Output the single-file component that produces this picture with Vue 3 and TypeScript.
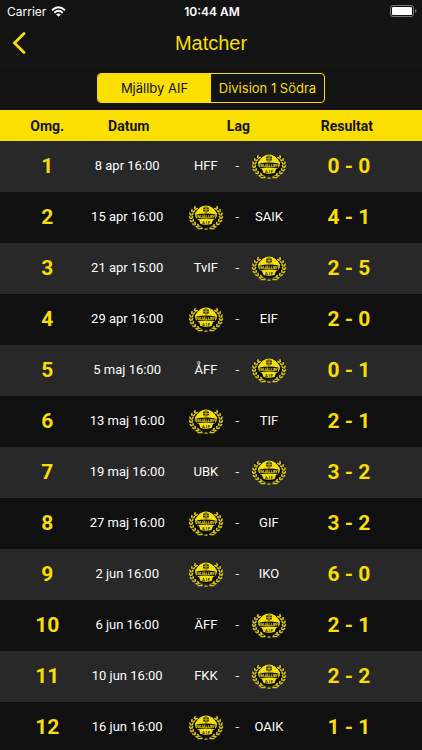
<script setup lang="ts">
import { ref } from 'vue'

interface Match {
  round: number
  date: string
  opponent: string
  home: boolean
  result: string
}

interface Leaf {
  x: number
  y: number
  turn: number
}

const tabs = ['Mjällby AIF', 'Division 1 Södra']
const activeTab = ref(0)

const matches: Match[] = [
  { round: 1, date: '8 apr 16:00', opponent: 'HFF', home: false, result: '0 - 0' },
  { round: 2, date: '15 apr 16:00', opponent: 'SAIK', home: true, result: '4 - 1' },
  { round: 3, date: '21 apr 15:00', opponent: 'TvIF', home: false, result: '2 - 5' },
  { round: 4, date: '29 apr 16:00', opponent: 'EIF', home: true, result: '2 - 0' },
  { round: 5, date: '5 maj 16:00', opponent: 'ÅFF', home: false, result: '0 - 1' },
  { round: 6, date: '13 maj 16:00', opponent: 'TIF', home: true, result: '2 - 1' },
  { round: 7, date: '19 maj 16:00', opponent: 'UBK', home: false, result: '3 - 2' },
  { round: 8, date: '27 maj 16:00', opponent: 'GIF', home: true, result: '3 - 2' },
  { round: 9, date: '2 jun 16:00', opponent: 'IKO', home: true, result: '6 - 0' },
  { round: 10, date: '6 jun 16:00', opponent: 'ÄFF', home: false, result: '2 - 1' },
  { round: 11, date: '10 jun 16:00', opponent: 'FKK', home: false, result: '2 - 2' },
  { round: 12, date: '16 jun 16:00', opponent: 'OAIK', home: true, result: '1 - 1' },
]

// The two sides of a match in playing order; null stands for the club itself.
function sides(m: Match): (string | null)[] {
  return m.home ? [null, '-', m.opponent] : [m.opponent, '-', null]
}

// Leaves of the left laurel branch, from the foot up to the tip, in pairs.
const leaves: Leaf[] = []
for (let i = 0; i < 7; i++) {
  const deg = 124 + i * 17
  const a = (deg * Math.PI) / 180
  for (const side of [-1, 1]) {
    const r = 1 + side * 0.075
    leaves.push({
      x: 35 + Math.cos(a) * 30 * r,
      y: 25 + Math.sin(a) * 23 * r,
      turn: deg + 90 - side * 28,
    })
  }
}
</script>

<template>
  <div class="app">
    <svg class="defs" aria-hidden="true">
      <symbol id="crest" viewBox="0 0 70 52">
        <ellipse cx="35" cy="24" rx="27" ry="21" fill="#0c0c0a" />
        <g id="branch">
          <path d="M22 46Q7 38 6 24Q6 12 13 5" fill="none" stroke="#0c0c0a" stroke-width="6" />
          <ellipse
            v-for="(leaf, i) in leaves"
            :key="i"
            rx="3.6"
            ry="1.8"
            fill="#d6c314"
            :transform="`translate(${leaf.x} ${leaf.y}) rotate(${leaf.turn})`"
          />
        </g>
        <use href="#branch" transform="translate(70 0) scale(-1 1)" />
        <path d="M13 19Q22 3 35 3T57 19Q58 25 52 31Q35 36 18 31Q12 25 13 19Z" fill="#f5e00a" />
        <circle cx="35" cy="11" r="6" fill="#2a280c" />
        <path
          d="M35 5v12M29 11h12M31 7q4 3 8 0M31 15q4-3 8 0"
          fill="none"
          stroke="#e0cd0c"
          stroke-width="1.200"
        />
        <path d="M16 21Q35 17 54 21L53 30Q35 28 17 30Z" fill="#0c0c0a" />
        <path d="M21 32Q35 29 49 32L46 40Q35 43 24 40Z" fill="#f5e00a" />
        <path d="M18 49h10M32 50h6M42 49h10" stroke="#d8c60a" stroke-width="2.500" />
        <path d="M21 44l7 4M49 44l-7 4" stroke="#d8c60a" stroke-width="1.500" />
      </symbol>
    </svg>

    <div class="status">
      <div class="carrier">
        <span>Carrier</span>
        <svg width="15" height="11" viewBox="0 0 15 11" role="img" aria-label="Wi-Fi">
          <g fill="none" stroke="#fff" stroke-width="1.9">
            <path d="M1 4.200Q7.500-1.900 14 4.200" />
            <path d="M3.300 6.700Q7.500 2.800 11.700 6.700" />
          </g>
          <path d="M5.200 8.400Q7.500 6.400 9.800 8.400L7.500 10.800Z" fill="#fff" />
        </svg>
      </div>
      <strong class="time">10:44 AM</strong>
      <svg class="battery" width="27" height="12" viewBox="0 0 27 12" role="img" aria-label="Battery">
        <rect x=".5" y=".5" width="23" height="11" rx="2.500" fill="none" stroke="#77777a" />
        <rect x="2" y="2" width="20" height="8" rx="1" fill="#fff" />
        <path d="M25 4q1.500.5 1.500 2T25 8Z" fill="#77777a" />
      </svg>
    </div>

    <header class="nav">
      <button class="back" type="button" aria-label="Back">
        <svg width="14" height="22" viewBox="0 0 14 22">
          <path
            d="M12 1.500L2.500 11l9.500 9.500"
            fill="none"
            stroke="#f9dd04"
            stroke-width="2.800"
            stroke-linecap="round"
            stroke-linejoin="miter"
          />
        </svg>
      </button>
      <h1>Matcher</h1>
    </header>

    <div class="filter">
      <div class="segments">
        <button
          v-for="(tab, i) in tabs"
          :key="tab"
          type="button"
          :class="{ active: i === activeTab }"
          :aria-pressed="i === activeTab"
          @click="activeTab = i"
        >
          {{ tab }}
        </button>
      </div>
    </div>

    <main class="list">
      <table>
        <colgroup>
          <col class="col-round" />
          <col class="col-date" />
          <col class="col-teams" />
          <col class="col-result" />
        </colgroup>
        <thead>
          <tr>
            <th>Omg.</th>
            <th>Datum</th>
            <th>Lag</th>
            <th>Resultat</th>
          </tr>
        </thead>
        <tbody>
          <tr v-for="m in matches" :key="m.round">
            <td class="score">{{ m.round }}</td>
            <td class="date">{{ m.date }}</td>
            <td>
              <div class="teams">
                <template v-for="(side, i) in sides(m)" :key="i">
                  <span v-if="side">{{ side }}</span>
                  <svg v-else class="crest" viewBox="0 0 70 52" role="img" aria-label="Mjällby AIF">
                    <use href="#crest" width="70" height="52" />
                    <text class="crest-name" x="35" y="28" text-anchor="middle">MJÄLLBY</text>
                    <text class="crest-short" x="35" y="39" text-anchor="middle">A I F</text>
                  </svg>
                </template>
              </div>
            </td>
            <td class="score">{{ m.result }}</td>
          </tr>
        </tbody>
      </table>
    </main>
  </div>
</template>

<style>
body {
  margin: 0;
  background: #131313;
}
</style>

<style scoped>
.app {
  display: flex;
  flex-direction: column;
  height: 100vh;
  background: #131313;
  color: #fff;
  font-family: Inter, 'Liberation Sans', sans-serif;
}

.defs {
  position: absolute;
  width: 0;
  height: 0;
}

.status {
  display: grid;
  grid-template-columns: 1fr auto 1fr;
  align-items: center;
  height: 22px;
  padding: 0 5px 0 7px;
  font-size: 12px;
}

.carrier {
  display: flex;
  align-items: center;
  gap: 5px;
}

.time {
  font-weight: 600;
}

.battery {
  justify-self: end;
}

.nav {
  display: grid;
  grid-template-columns: 44px 1fr 44px;
  align-items: center;
  height: 41px;
  padding-bottom: 2px;
  border-bottom: 1px solid #181818;
}

.back {
  display: flex;
  padding: 0 0 0 12px;
  border: 0;
  background: none;
}

h1 {
  margin: 0;
  color: #f9dd04;
  font-family: 'Liberation Sans', Arial, sans-serif;
  font-size: 20px;
  font-weight: 400;
  line-height: 38px;
  text-align: center;
}

.filter {
  display: flex;
  justify-content: center;
  padding: 7px 0;
}

.segments {
  display: grid;
  grid-template-columns: 1fr 1fr;
  width: 54%;
  height: 30px;
  box-sizing: border-box;
  overflow: hidden;
  border: 1px solid #f9dd04;
  border-radius: 4px;
}

.segments button {
  padding: 0;
  border: 0;
  background: none;
  color: #f9dd04;
  font: inherit;
  font-size: 13px;
  white-space: nowrap;
}

.segments .active {
  background: #fadf00;
  color: #131313;
}

.list {
  flex: 1;
  min-height: 0;
  overflow-y: auto;
  scrollbar-width: none;
}

table {
  width: 100%;
  table-layout: fixed;
  border-collapse: collapse;
  font-family: Roboto, sans-serif;
  font-size: 13px;
  text-align: center;
}

.col-round {
  width: 20%;
}

.col-date {
  width: 21%;
}

.col-teams {
  width: 31%;
}

.col-result {
  width: 28%;
}

th,
td {
  box-sizing: border-box;
  padding: 0;
}

th {
  height: 31px;
  background: #fadf00;
  color: #131313;
  font-size: 14px;
  font-weight: 700;
}

td {
  height: 51px;
  padding-bottom: 2px;
  background: #101010;
}

tbody tr:nth-child(odd) td {
  background: #282828;
}

th:first-child,
td:first-child {
  padding-left: 10px;
}

th:last-child {
  padding-right: 32px;
}

td:last-child {
  padding-right: 28px;
}

.date {
  padding-right: 3px;
}

.score {
  color: #f9dd04;
  font-size: 21px;
  font-weight: 700;
}

.teams {
  display: grid;
  grid-template-columns: 36px 27px 36px;
  align-items: center;
  justify-content: center;
  padding-right: 2px;
}

.crest {
  width: 36px;
  height: 26px;
}

.crest-name {
  fill: #f5e00a;
  font: 700 8px Roboto, sans-serif;
}

.crest-short {
  fill: #14140c;
  font: 700 8px Roboto, sans-serif;
}
</style>
